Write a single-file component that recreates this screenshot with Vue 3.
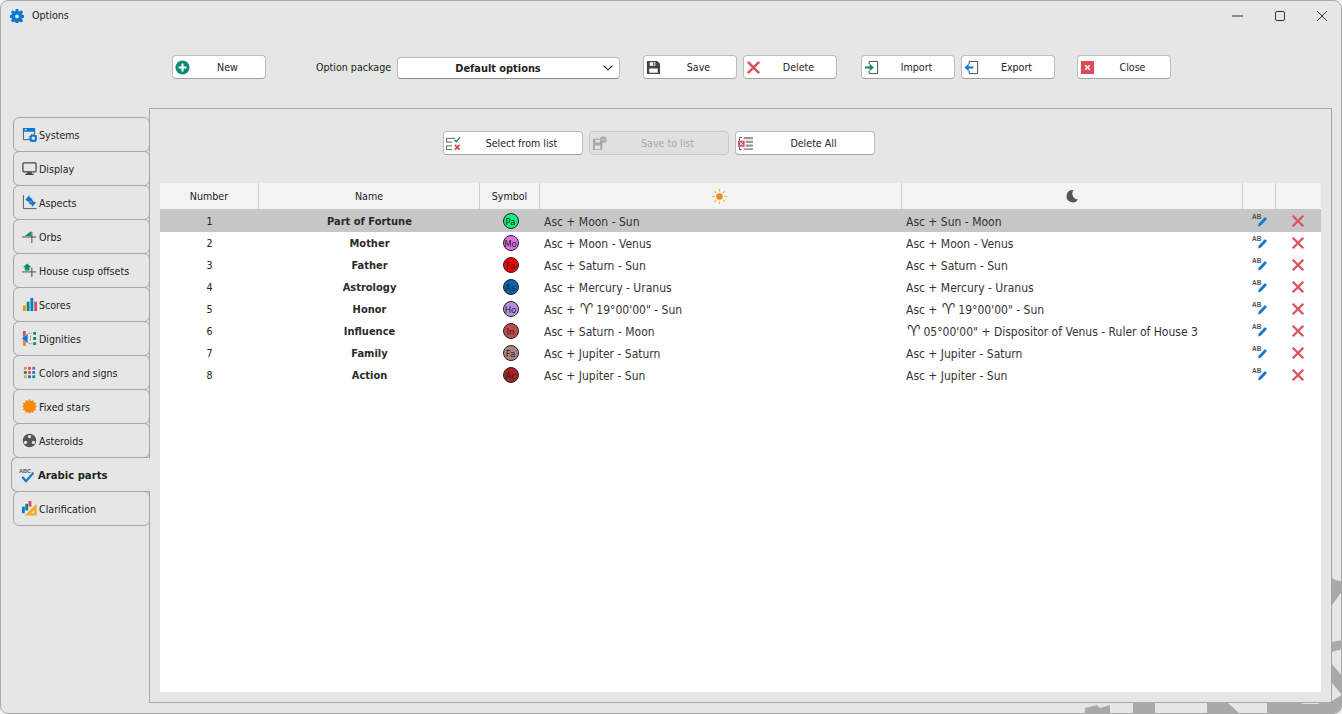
<script setup>
const icons = {
  gear: '<path fill="#0a78d7" d="M6.6 0h2.8l.4 2.2 1.3.6L13 1.5l2 2-1.3 1.9.6 1.3 2.2.4v2.8l-2.2.4-.6 1.3 1.3 1.9-2 2-1.9-1.3-1.3.6-.4 2.2H6.6l-.4-2.2-1.3-.6L3 15.5l-2-2 1.3-1.9-.6-1.3L-.5 9.9V7.1l2.2-.4.6-1.3L1 3.5l2-2 1.9 1.3 1.3-.6z"/><circle cx="8" cy="8.500" r="2.200" fill="#e6e6e6"/>',
  plus: '<circle cx="8" cy="8" r="7.500" fill="#0b8a74"/><path d="M8 3.800v8.400M3.800 8h8.400" stroke="#fff" stroke-width="2.200"/>',
  save: '<path fill="#444" d="M1 1h11l3 3v11H1z"/><path fill="#fff" d="M4 2.500h6v3.500H4zM3.500 9h9v4.500h-9z"/><path fill="#444" d="M7.500 3h1.500v2.500H7.500z"/>',
  del: '<path d="M2 2l12 12M14 2L2 14" stroke="#dd5262" stroke-width="2.700"/>',
  imp: '<path fill="none" stroke="#444" d="M5.500 4.500v-3h9v13h-9v-3"/><path fill="#0b8a74" d="M1 7h5V4l4.500 4L6 12V9H1z"/>',
  exp: '<path fill="none" stroke="#444" d="M5.500 4.500v-3h9v13h-9v-3"/><path fill="#0a78d7" d="M10 7H5V4L.5 8 5 12V9h5z"/>',
  close: '<path fill="#dd4a5a" d="M1 1h14v14H1z"/><path d="M5.500 5.500l5 5M10.500 5.500l-5 5" stroke="#fff" stroke-width="1.600"/>',
  select: '<path fill="none" stroke="#555" d="M.5 2.500h9M.5 6.500h6M.5 10.500h6M.5 14.500h6M.5 2.500v4M.5 10.500v4"/><path fill="none" stroke="#0b8a74" stroke-width="1.500" d="M9 4l2 2 4-4.500"/><path stroke="#dd4a5a" stroke-width="2" d="M9.500 9.500l5 5M14.500 9.500l-5 5"/>',
  saveList: '<path fill="#a8a8a8" d="M1 3h10v12H1z"/><path fill="#e0e0e0" d="M3.500 4h5v3h-5zM3 10h6v4H3z"/><circle cx="12" cy="4" r="3.500" fill="#a8a8a8"/><path stroke="#e0e0e0" d="M10 4h4"/>',
  delAll: '<path fill="none" stroke="#555" d="M4 1.500H1.500v13H4"/><path fill="#9a9a9a" d="M6 1h10v2.500H6zM8 5h8v2.500H8zM8 9h8v2.500H8zM6 13h10v2H6z"/><path fill="#dd4a5a" d="M0 5h7v6.500H0z"/><path stroke="#fff" d="M2 6.500l3 3.500M5 6.500l-3 3.500"/>',
  systems: '<path fill="#0a78d7" d="M1 1h13v4H1z"/><path fill="none" stroke="#555" d="M1.500 4v9.500h7M13.500 4v4"/><path fill="#fff" d="M3 2.500h2v1H3z"/><circle cx="12" cy="12" r="3" fill="none" stroke="#0a78d7" stroke-width="2.200"/><circle cx="12" cy="12" r="4.500" fill="none" stroke="#0a78d7" stroke-dasharray="1.500 1.500"/>',
  display: '<rect x="1" y="2" width="14" height="9.500" rx="1" fill="none" stroke="#444" stroke-width="1.300"/><path fill="#444" d="M5.500 12h5v1.500h2V15h-9v-1.500h2z"/>',
  aspects: '<path fill="none" stroke="#555" d="M1.500 0v14.500h14"/><path fill="#0a78d7" d="M3.500 5L8 0v2.500C10 3 11 4.500 11.500 6.500L9 7.500C8.700 6.500 8.500 6 8 5.500V8z"/><path fill="#0a78d7" d="M15 8l-4.500 5v-2.500C8.500 10 7.500 9 7 8l2.500-1c.3.6.5 1 1 1.300V6z"/>',
  orbs: '<path stroke="#444" d="M0 8.500h15M10.500 3v12"/><path fill="#0b8a74" d="M3 7.500L9.500 2.500v5z"/>',
  house: '<path stroke="#444" d="M0 9.500h15M10.500 5v10"/><path fill="#0b8a74" d="M5.500 .500L10 4.500H8v3.500H3V4.500H1z"/>',
  scores: '<path fill="#f28c1c" d="M1 9h3v6H1z"/><path fill="#0b8a74" d="M5 5h3v10H5z"/><path fill="#0a78d7" d="M9 1h3v14H9z"/><path fill="#dd4a5a" d="M13 5h3v10h-3z"/>',
  dignities: '<path fill="#dd4a5a" d="M1 0h3v4L1 7z"/><path fill="#0a78d7" d="M6 3v10L0 8z"/><path fill="#f28c1c" d="M1 9l3 3v4H1z"/><path fill="none" stroke="#888" stroke-dasharray="2 1" d="M7 2.500h4M7 13.500h4M9 5v6"/><path fill="#0b8a74" d="M12 1h3v3h-3zM12 6.500h3v3h-3zM12 12h3v3h-3z"/>',
  colors: '<path fill="#f28c1c" d="M2 2h3v3H2z"/><path fill="#dd4a5a" d="M6.500 2h3v3h-3z"/><path fill="#8a5fb0" d="M11 2h3v3h-3z"/><path fill="#0b8a74" d="M2 6.500h3v3H2z"/><path fill="#dd4a5a" d="M6.500 6.500h3v3h-3z"/><path fill="#0a78d7" d="M11 6.500h3v3h-3z"/><path fill="#e0b020" d="M2 11h3v3H2z"/><path fill="#0a78d7" d="M6.500 11h3v3h-3z"/><path fill="#0b8a74" d="M11 11h3v3h-3z"/>',
  stars: '<path fill="#f58a0b" d="M8 0l1.500 2.200L12 1l.5 2.700 2.700.5L14 6.500 16 8l-2 1.500 1.200 2.300-2.700.5L12 15l-2.500-1.200L8 16l-1.500-2.200L4 15l-.5-2.700-2.700-.5L2 9.500 0 8l2-1.500L.800 4.200l2.700-.5L4 1l2.500 1.200z"/>',
  asteroids: '<circle cx="8" cy="8" r="7.200" fill="#555"/><circle cx="8" cy="3.800" r="1.700" fill="#e6e6e6"/><circle cx="3.800" cy="10" r="1.700" fill="#e6e6e6"/><circle cx="12.200" cy="10" r="1.700" fill="#e6e6e6"/>',
  arabic: '<text x="0" y="5.500" font-size="6" font-weight="700" fill="#555" font-family="Liberation Sans">ABC</text><path fill="none" stroke="#0a78d7" stroke-width="2.400" d="M3.500 9.500l4 4.500L15.500 5"/>',
  clarif: '<path fill="#0a78d7" d="M0 6h3v7H0z"/><path fill="#0b8a74" d="M3.500 3h3v7h-3z"/><path fill="#dd4a5a" d="M7 0h3v6H7z"/><path fill="#f5a623" d="M15.500 3v12.500H3z"/><path fill="#e6e6e6" d="M13 9.500v3.500H9.500z"/>',
  edit: '<text x="0" y="6" font-size="6.500" font-weight="700" fill="#555" font-family="Liberation Sans">AB</text><path fill="#1a78c8" d="M13 4l2 2-6 6.500-3 1 .8-3z"/>',
  sun: '<circle cx="8" cy="8" r="3.500" fill="#f58a0b"/><path stroke="#f5b050" stroke-width="1.200" d="M8 0v2.800M8 13.200V16M0 8h2.800M13.200 8H16M2.300 2.300l2 2M11.700 11.700l2 2M2.300 13.700l2-2M11.700 4.300l2-2"/>',
  moon: '<path fill="#555" d="M9.500 2a6.200 6.200 0 1 0 4.500 9.500A6 6 0 0 1 9.500 2z"/>'
}

const topLeft = { label: 'New', icon: 'plus' }
const saveGroup = [{ label: 'Save', icon: 'save' }, { label: 'Delete', icon: 'del' }]
const portGroup = [{ label: 'Import', icon: 'imp' }, { label: 'Export', icon: 'exp' }]
const closeBtn = { label: 'Close', icon: 'close' }

const listButtons = [
  { label: 'Select from list', icon: 'select' },
  { label: 'Save to list', icon: 'saveList', disabled: true },
  { label: 'Delete All', icon: 'delAll' }
]

const tabs = [
  { label: 'Systems', icon: 'systems' },
  { label: 'Display', icon: 'display' },
  { label: 'Aspects', icon: 'aspects' },
  { label: 'Orbs', icon: 'orbs' },
  { label: 'House cusp offsets', icon: 'house' },
  { label: 'Scores', icon: 'scores' },
  { label: 'Dignities', icon: 'dignities' },
  { label: 'Colors and signs', icon: 'colors' },
  { label: 'Fixed stars', icon: 'stars' },
  { label: 'Asteroids', icon: 'asteroids' },
  { label: 'Arabic parts', icon: 'arabic', active: true },
  { label: 'Clarification', icon: 'clarif' }
]

const ARIES = '♈︎'

const rows = [
  { n: 1, name: 'Part of Fortune', sym: 'Pa', color: '#10f080', day: 'Asc + Moon - Sun', night: 'Asc + Sun - Moon' },
  { n: 2, name: 'Mother', sym: 'Mo', color: '#e070e0', day: 'Asc + Moon - Venus', night: 'Asc + Moon - Venus' },
  { n: 3, name: 'Father', sym: 'Fa', color: '#f00000', day: 'Asc + Saturn - Sun', night: 'Asc + Saturn - Sun' },
  { n: 4, name: 'Astrology', sym: 'As', color: '#0a60b0', day: 'Asc + Mercury - Uranus', night: 'Asc + Mercury - Uranus' },
  { n: 5, name: 'Honor', sym: 'Ho', color: '#b48fe0', day: `Asc + ${ARIES}19°00'00" - Sun`, night: `Asc + ${ARIES}19°00'00" - Sun` },
  { n: 6, name: 'Influence', sym: 'In', color: '#c04a4a', day: 'Asc + Saturn - Moon', night: `${ARIES}05°00'00" + Dispositor of Venus - Ruler of House 3` },
  { n: 7, name: 'Family', sym: 'Fa', color: '#b08282', day: 'Asc + Jupiter - Saturn', night: 'Asc + Jupiter - Saturn' },
  { n: 8, name: 'Action', sym: 'Ac', color: '#a82222', day: 'Asc + Jupiter - Sun', night: 'Asc + Jupiter - Sun' }
]

// the zodiac glyph is set larger than the text around it
const parts = (text) => text.split(ARIES)
</script>

<template>
  <div class="window">
    <svg class="watermark" width="1342" height="714" viewBox="0 0 1342 714">
      <path fill="#a9a9a9" d="M1085 714v-6l12-3 3 3 10-3v9zM1133 703h22v11h-22zM1207 703h21l12 11h-33zM1267 703h75v11h-75zM1331 576h11v138h-11z" />
      <path fill="#e6e6e6" d="M1331 560h11v21c-4 0-8-1-11-4zM1332 605l8-11 2-1v47l-10 2zM1332 652l10-3v27l-10-12zM1332 683l10 12-10 6zM1300 703h20l-2 1h-14z" />
    </svg>

    <header class="titlebar">
      <svg class="title-gear" viewBox="0 0 16 16" v-html="icons.gear"></svg>
      <span class="title-text">Options</span>
      <div class="win-controls">
        <svg viewBox="0 0 12 12"><path d="M0 6h11" stroke="#333" /></svg>
        <svg viewBox="0 0 12 12"><rect x="1.500" y="1.500" width="9" height="9" rx="1.500" fill="none" stroke="#333" /></svg>
        <svg viewBox="0 0 12 12"><path d="M1 1l10 10M11 1L1 11" stroke="#333" /></svg>
      </div>
    </header>

    <div class="toolbar">
      <button class="btn new-btn">
        <svg viewBox="0 0 16 16" v-html="icons[topLeft.icon]"></svg>
        <span>{{ topLeft.label }}</span>
      </button>
      <label class="pkg-label">Option package</label>
      <div class="combo">
        <span>Default options</span>
        <svg class="chevron" viewBox="0 0 10 6"><path d="M.5.500L5 5 9.500.500" fill="none" stroke="#333" stroke-width="1.100" /></svg>
      </div>
      <div class="btn-group save-group">
        <button v-for="b in saveGroup" :key="b.label" class="btn">
          <svg viewBox="0 0 16 16" v-html="icons[b.icon]"></svg>
          <span>{{ b.label }}</span>
        </button>
      </div>
      <div class="btn-group port-group">
        <button v-for="b in portGroup" :key="b.label" class="btn">
          <svg viewBox="0 0 16 16" v-html="icons[b.icon]"></svg>
          <span>{{ b.label }}</span>
        </button>
      </div>
      <button class="btn close-btn">
        <svg viewBox="0 0 16 16" v-html="icons[closeBtn.icon]"></svg>
        <span>{{ closeBtn.label }}</span>
      </button>
    </div>

    <div class="main">
      <nav class="tabs">
        <div v-for="t in tabs" :key="t.label" class="tab" :class="{ active: t.active }">
          <svg viewBox="0 0 16 16" v-html="icons[t.icon]"></svg>
          <span>{{ t.label }}</span>
        </div>
      </nav>

      <section class="pane">
        <div class="list-actions">
          <button v-for="b in listButtons" :key="b.label" class="btn wide" :class="{ disabled: b.disabled }">
            <svg viewBox="0 0 16 16" v-html="icons[b.icon]"></svg>
            <span>{{ b.label }}</span>
          </button>
        </div>

        <div class="table">
          <div class="head">
            <div class="cell">Number</div>
            <div class="cell">Name</div>
            <div class="cell">Symbol</div>
            <div class="cell"><svg class="head-icon sun" viewBox="0 0 16 16" v-html="icons.sun"></svg></div>
            <div class="cell"><svg class="head-icon" viewBox="0 0 16 16" v-html="icons.moon"></svg></div>
            <div class="cell"></div>
            <div class="cell"></div>
          </div>
          <div v-for="(r, i) in rows" :key="r.n" class="row" :class="{ selected: i === 0 }">
            <div class="cell">{{ r.n }}</div>
            <div class="cell name">{{ r.name }}</div>
            <div class="cell"><span class="badge" :style="{ background: r.color }">{{ r.sym }}</span></div>
            <div class="cell formula">
              <span>
                <template v-for="(p, k) in parts(r.day)" :key="k"><span v-if="k" class="aries">{{ ARIES }}</span>{{ p }}</template>
              </span>
            </div>
            <div class="cell formula">
              <span>
                <template v-for="(p, k) in parts(r.night)" :key="k"><span v-if="k" class="aries">{{ ARIES }}</span>{{ p }}</template>
              </span>
            </div>
            <div class="cell"><svg class="edit" viewBox="0 0 16 16" v-html="icons.edit"></svg></div>
            <div class="cell"><svg class="remove" viewBox="0 0 16 16" v-html="icons.del"></svg></div>
          </div>
        </div>
      </section>
    </div>
  </div>
</template>

<style>
html, body {
  margin: 0;
  background: #f4f4f4;
  overflow: hidden;
}
</style>

<style scoped>
.window {
  position: relative;
  box-sizing: border-box;
  width: 1342px;
  height: 714px;
  display: flex;
  flex-direction: column;
  background: #e6e6e6;
  border: 1px solid #a9a9a9;
  border-radius: 8px;
  overflow: hidden;
  font-family: "DejaVu Sans", Tahoma, sans-serif;
  font-stretch: condensed;
  font-size: 10.600px;
  color: #222;
}
.watermark {
  position: absolute;
  left: -1px;
  top: -1px;
}
.titlebar {
  position: relative;
  height: 29px;
  flex: none;
  display: flex;
  align-items: center;
  padding-left: 9px;
}
.title-gear {
  width: 14px;
  height: 14px;
}
.title-text {
  margin-left: 8px;
  padding-bottom: 2px;
}
.win-controls {
  margin-left: auto;
  margin-right: 13px;
  display: flex;
  gap: 30px;
}
.win-controls svg {
  width: 12px;
  height: 12px;
}
.toolbar {
  position: relative;
  flex: none;
  height: 24px;
  margin-top: 25px;
  padding-left: 171px;
  display: flex;
  align-items: center;
}
.btn {
  box-sizing: border-box;
  width: 94px;
  height: 24px;
  padding: 0 0 0 2px;
  display: flex;
  align-items: center;
  background: #fff;
  border: 1px solid #bcbcbc;
  border-bottom-color: #a0a0a0;
  border-radius: 4px;
  font: inherit;
  color: #222;
}
.btn svg {
  flex: none;
  width: 15px;
  height: 15px;
}
.btn span {
  flex: 1;
  text-align: center;
}
.pkg-label {
  margin-left: 50px;
  width: 81px;
}
.combo {
  box-sizing: border-box;
  width: 223px;
  height: 22px;
  margin-top: 2px;
  position: relative;
  display: flex;
  align-items: center;
  justify-content: center;
  padding-right: 21px;
  background: #fff;
  border: 1px solid #bcbcbc;
  border-bottom-color: #8a8a8a;
  border-radius: 4px;
  font-size: 10.900px;
  font-weight: 700;
}
.chevron {
  position: absolute;
  right: 6px;
  top: 7px;
  width: 10px;
  height: 6px;
}
.btn-group {
  display: flex;
  gap: 6px;
}
.save-group {
  margin-left: 23px;
}
.port-group {
  margin-left: 24px;
}
.close-btn {
  margin-left: 22px;
}
.main {
  position: relative;
  flex: 1;
  min-height: 0;
  display: flex;
  margin-top: 29px;
  margin-bottom: 10px;
}
.tabs {
  position: relative;
  z-index: 1;
  flex: none;
  width: 149px;
  padding-top: 9px;
  margin-right: -1px;
  display: flex;
  flex-direction: column;
  align-items: flex-end;
}
.tab {
  box-sizing: border-box;
  width: 137px;
  height: 35px;
  margin-bottom: -1px;
  padding: 0 0 0 8px;
  display: flex;
  align-items: center;
  gap: 2px;
  background: #e6e6e6;
  border: 1px solid #a6a6a6;
  border-radius: 6px;
}
.tab svg {
  flex: none;
  width: 15px;
  height: 15px;
}
.tab.active {
  width: 139px;
  padding: 1px 0 0 7px;
  gap: 4px;
  border-right: none;
  border-radius: 6px 0 0 6px;
  font-weight: 700;
  font-size: 11.200px;
}
.pane {
  box-sizing: border-box;
  width: 1183px;
  position: relative;
  padding: 22px 10px 10px;
  display: flex;
  flex-direction: column;
  background: #e6e6e6;
  border: 1px solid #a6a6a6;
}
.list-actions {
  display: flex;
  gap: 6px;
  margin-left: 283px;
}
.wide {
  width: 140px;
}
.btn.disabled {
  background: #e0e0e0;
  border-color: #cacaca;
  color: #a8a8a8;
}
.table {
  flex: 1;
  margin-top: 28px;
  background: #fff;
}
.head,
.row {
  display: grid;
  grid-template-columns: 99px 221px 60px 362px 341px 33px 44px;
}
.head {
  height: 26px;
  background: #f3f3f3;
}
.head .cell {
  border-right: 1px solid #cfcfcf;
  justify-content: center;
}
.head .cell:last-child {
  border-right: none;
}
.head-icon {
  width: 16px;
  height: 16px;
}
.head-icon.sun {
  width: 15px;
  height: 15px;
  margin-right: 3px;
}
.row {
  height: 22px;
}
.row.selected {
  height: 23px;
  padding-top: 1px;
  box-sizing: border-box;
  background: #c6c6c6;
}
.cell {
  box-sizing: border-box;
  display: flex;
  align-items: center;
  justify-content: center;
  white-space: nowrap;
}
.name {
  font-size: 11px;
  font-weight: 700;
  color: #2a2a2a;
}
.formula {
  justify-content: flex-start;
  padding: 2px 0 0 4px;
  font-size: 12px;
  color: #333;
}
.aries {
  font-size: 15px;
  font-stretch: normal;
  line-height: 0;
  margin: 0 3px 0 1px;
}
.badge {
  box-sizing: border-box;
  width: 16px;
  height: 16px;
  margin-left: 1px;
  display: flex;
  align-items: center;
  justify-content: center;
  border: 1px solid #222;
  border-radius: 50%;
  font-size: 9.500px;
  color: #222;
}
.edit {
  width: 16px;
  height: 16px;
}
.remove {
  width: 14px;
  height: 14px;
}
</style>
